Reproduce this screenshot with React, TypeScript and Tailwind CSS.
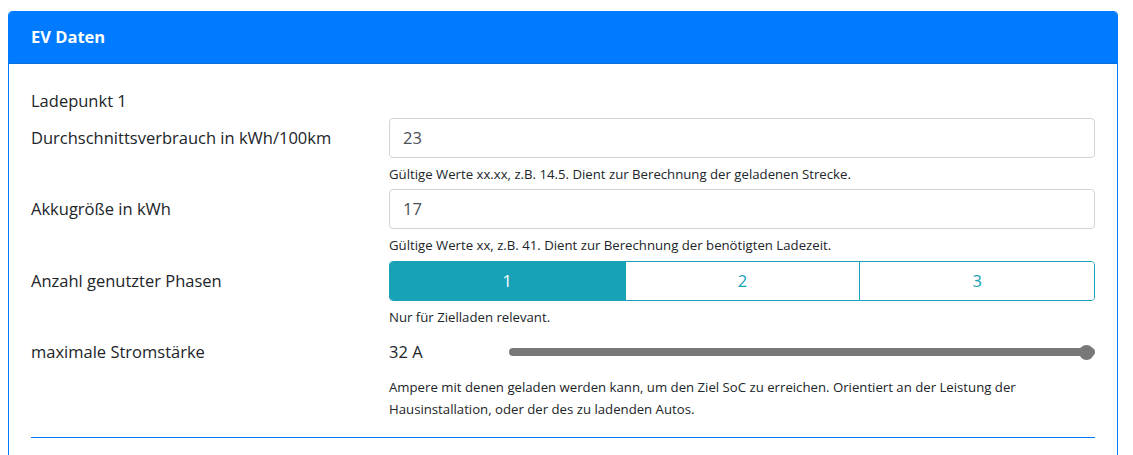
import { useState } from "react";

const font = { fontFamily: '"Open Sans", "Noto Sans", sans-serif' };

function Help({ children }: { children: React.ReactNode }) {
  return <div className="mt-[7px] text-[13.2px] leading-[19px] text-[#212529]">{children}</div>;
}

function NumberField({ value }: { value: string }) {
  return (
    <div className="flex h-10 items-center rounded border border-[#ced4da] bg-white px-[13px] text-[16.5px] text-[#495057]">
      {value}
    </div>
  );
}

export default function App() {
  const [phases, setPhases] = useState(1);
  const amps = 32;

  return (
    <div className="min-h-screen bg-white pl-2 pt-[11px] text-[16.5px] text-[#212529]" style={font}>
      <div className="w-[1110px] overflow-hidden rounded-t border border-[#007bff] bg-white">
        {/* card header */}
        <div className="flex h-[52px] items-center border-b border-[#0b6fd8] bg-[#007bff] px-[22px] font-bold text-white">
          EV Daten
        </div>

        {/* card body */}
        <div className="px-[22px] pt-[25px] pb-6">
          <div className="h-6 leading-6">Ladepunkt 1</div>

          <div className="mt-[5px] grid grid-cols-[358px_1fr]">
            <div className="flex h-10 items-center">Durchschnittsverbrauch in kWh/100km</div>
            <div>
              <NumberField value="23" />
              <Help>Gültige Werte xx.xx, z.B. 14.5. Dient zur Berechnung der geladenen Strecke.</Help>
            </div>
          </div>

          <div className="mt-[5px] grid grid-cols-[358px_1fr]">
            <div className="flex h-10 items-center">Akkugröße in kWh</div>
            <div>
              <NumberField value="17" />
              <Help>Gültige Werte xx, z.B. 41. Dient zur Berechnung der benötigten Ladezeit.</Help>
            </div>
          </div>

          <div className="mt-[6px] grid grid-cols-[358px_1fr]">
            <div className="flex h-10 items-center">Anzahl genutzter Phasen</div>
            <div>
              <div className="grid h-10 grid-cols-3 overflow-hidden rounded border border-[#17a2b8]">
                {[1, 2, 3].map((n) => (
                  <button
                    key={n}
                    onClick={() => setPhases(n)}
                    className={
                      n === phases
                        ? "bg-[#17a2b8] text-[16.5px] text-white"
                        : "border-l border-[#17a2b8] bg-white text-[16.5px] text-[#17a2b8]"
                    }
                  >
                    {n}
                  </button>
                ))}
              </div>
              <Help>Nur für Zielladen relevant.</Help>
            </div>
          </div>

          <div className="mt-[13px] grid grid-cols-[358px_1fr]">
            <div className="flex h-6 items-center">maximale Stromstärke</div>
            <div>
              <div className="flex h-6 items-center">
                <div className="w-[120px]">{amps} A</div>
                <div className="relative flex h-6 flex-1 items-center">
                  <div className="h-2 w-full rounded-full bg-[#787878]" />
                  <div className="absolute right-[1px] h-[15px] w-[15px] rounded-full bg-[#787878]" />
                </div>
              </div>
              <div className="mt-3 text-[13.2px] leading-[22px]">
                Ampere mit denen geladen werden kann, um den Ziel SoC zu erreichen. Orientiert an der Leistung der
                <br />
                Hausinstallation, oder der des zu ladenden Autos.
              </div>
            </div>
          </div>

          <div className="mt-[17px] h-px bg-[#007bff]" />
          <div className="h-10" />
        </div>
      </div>
    </div>
  );
}
